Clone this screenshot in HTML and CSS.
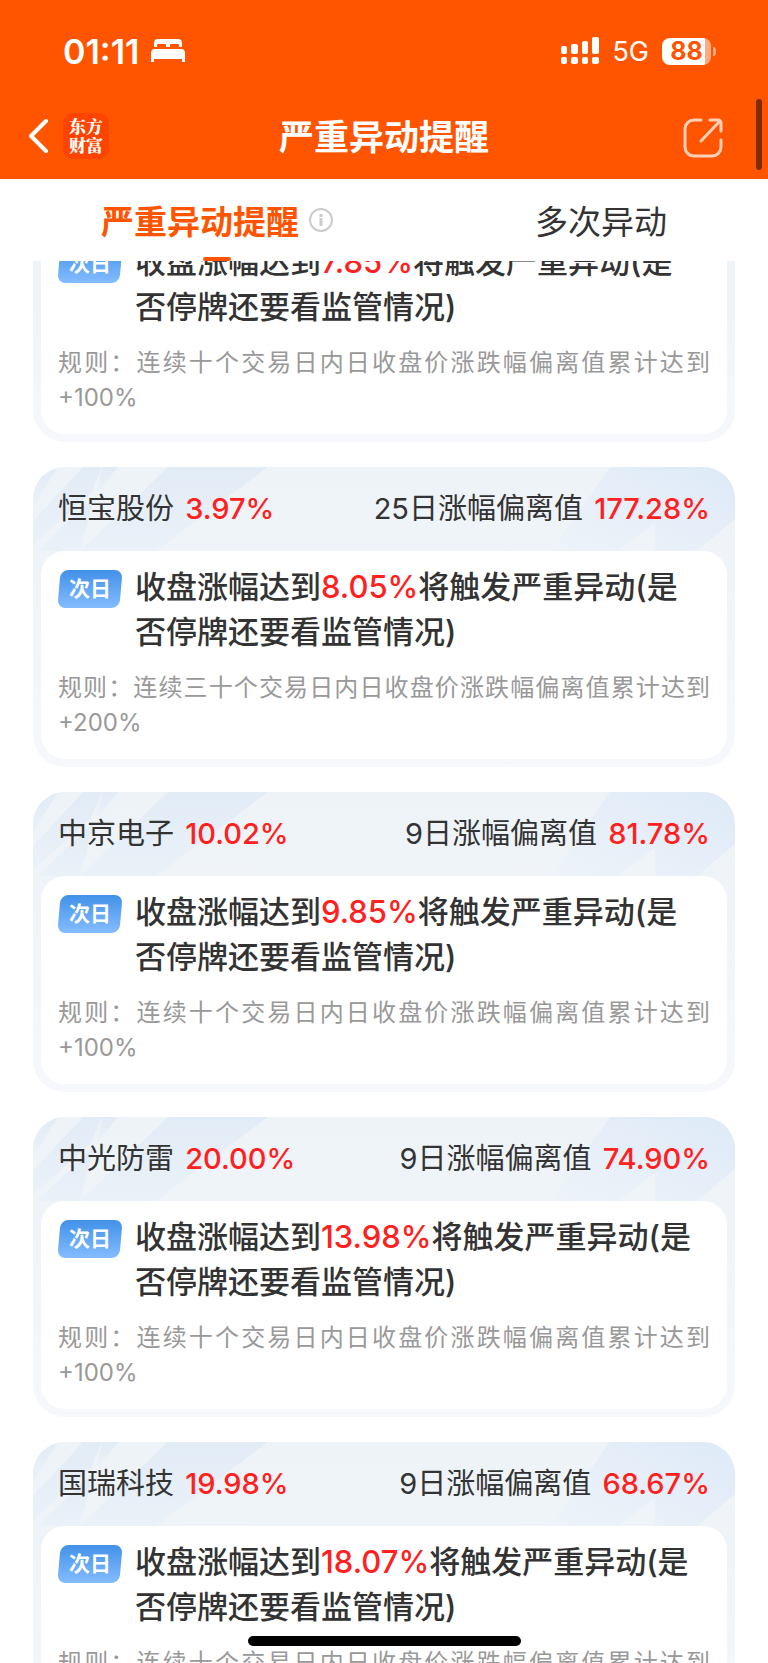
FILE: index.html
```html
<!DOCTYPE html>
<html lang="zh-CN">
<head>
  <meta charset="UTF-8">
  <meta name="viewport" content="width=device-width, initial-scale=1.0">
  <title>严重异动提醒</title>
  <link rel="stylesheet" href="styles.css">
</head>
<body>
  <svg class="defs" aria-hidden="true">
    <defs>
      <linearGradient id="ray" x1="0" y1="0" x2="0" y2="1">
        <stop offset="0" stop-color="#e2ecf6"/>
        <stop offset="1" stop-color="#eaf1f9"/>
      </linearGradient>
      <linearGradient id="ray-right" x1="0" y1="1" x2="1" y2="0">
        <stop offset="0" stop-color="#eef3f9"/>
        <stop offset="1" stop-color="#deeaf8"/>
      </linearGradient>
    </defs>
    <symbol id="rays" viewBox="0 0 702 84" preserveAspectRatio="none">
      <path fill="url(#ray)" d="M0 0H25L0 40z"/>
      <path fill="url(#ray)" d="M50 0H69L58 26 0 78V54z"/>
      <path fill="url(#ray)" d="M69 0H85L64 26z"/>
      <path fill="url(#ray)" d="M61 30 47 84H4z"/>
      <path fill="url(#ray)" d="M135 0H235L123 84H47z"/>
      <path fill="url(#ray-right)" d="M577 0H702V52L664 84H622V56L584 84H518z"/>
    </symbol>
  </svg>

  <div class="app">
    <header class="header">
      <div class="status">
        <span class="time">01:11</span>
        <svg class="bed" viewBox="0 0 34 24" fill="#fff">
          <path d="M3 8V4a4 4 0 0 1 4-4h20a4 4 0 0 1 4 4v4h-3V6a1 1 0 0 0-1-1h-7a1 1 0 0 0-1 1v2h-4V6a1 1 0 0 0-1-1H7a1 1 0 0 0-1 1v2z"/>
          <path d="M0 23V14a4 4 0 0 1 4-4h26a4 4 0 0 1 4 4v9h-3v-3H3v3z"/>
        </svg>
        <svg class="signal" viewBox="0 0 38 28" fill="#fff">
          <rect x="0" y="9" width="6" height="8" rx="2"/>
          <rect x="10" y="7" width="7" height="10" rx="2"/>
          <rect x="21" y="4" width="6" height="13" rx="2"/>
          <rect x="31" y="0" width="7" height="17" rx="2"/>
          <rect x="0" y="20" width="6" height="7" rx="2"/>
          <rect x="10" y="20" width="7" height="7" rx="2"/>
          <rect x="21" y="20" width="6" height="7" rx="2"/>
          <rect x="31" y="20" width="7" height="7" rx="2"/>
        </svg>
        <span class="network">5G</span>
        <span class="battery">88</span>
      </div>
      <nav class="nav">
        <button class="back" aria-label="返回">
          <svg width="20" height="36" viewBox="0 0 20 36" fill="none" stroke="#fff" stroke-width="4" stroke-linecap="round" stroke-linejoin="round">
            <path d="M17 3 2 18l15 15"/>
          </svg>
        </button>
        <span class="logo">东方<br>财富</span>
        <h1 class="title">严重异动提醒</h1>
        <button class="share" aria-label="分享">
          <svg width="40" height="40" viewBox="0 0 40 40" fill="none" stroke="#ffd0b8" stroke-width="3" stroke-linecap="round" stroke-linejoin="round">
            <path d="M18 2h-7a9 9 0 0 0-9 9v18a9 9 0 0 0 9 9h18a9 9 0 0 0 9-9v-7M27 2h8a3 3 0 0 1 3 3v8M36 4 18 23"/>
          </svg>
        </button>
      </nav>
      <div class="scrollbar"></div>
    </header>

    <div class="tabs">
      <button class="tab active">严重异动提醒
        <svg width="24" height="24" viewBox="0 0 24 24" fill="none" stroke="#ccc" stroke-width="2">
          <circle cx="12" cy="12" r="11"/>
          <path d="M12 10v8M12 6v3" stroke-width="3"/>
        </svg>
      </button>
      <button class="tab">多次异动</button>
    </div>

    <main class="list">
      <section class="card scrolled">
        <div class="card-body">
          <div class="alert">
            <span class="badge">次日</span>
            <p>收盘涨幅达到<b>7.85%</b>将触发严重异动(是否停牌还要看监管情况)</p>
          </div>
          <p class="rule">规则：连续十个交易日内日收盘价涨跌幅偏离值累计达到+100%</p>
        </div>
      </section>

      <section class="card">
        <svg class="rays"><use href="#rays"/></svg>
        <div class="card-head">
          <span>恒宝股份 <b>3.97%</b></span>
          <span>25日涨幅偏离值 <b>177.28%</b></span>
        </div>
        <div class="card-body">
          <div class="alert">
            <span class="badge">次日</span>
            <p>收盘涨幅达到<b>8.05%</b>将触发严重异动(是否停牌还要看监管情况)</p>
          </div>
          <p class="rule">规则：连续三十个交易日内日收盘价涨跌幅偏离值累计达到+200%</p>
        </div>
      </section>

      <section class="card">
        <svg class="rays"><use href="#rays"/></svg>
        <div class="card-head">
          <span>中京电子 <b>10.02%</b></span>
          <span>9日涨幅偏离值 <b>81.78%</b></span>
        </div>
        <div class="card-body">
          <div class="alert">
            <span class="badge">次日</span>
            <p>收盘涨幅达到<b>9.85%</b>将触发严重异动(是否停牌还要看监管情况)</p>
          </div>
          <p class="rule">规则：连续十个交易日内日收盘价涨跌幅偏离值累计达到+100%</p>
        </div>
      </section>

      <section class="card">
        <svg class="rays"><use href="#rays"/></svg>
        <div class="card-head">
          <span>中光防雷 <b>20.00%</b></span>
          <span>9日涨幅偏离值 <b>74.90%</b></span>
        </div>
        <div class="card-body">
          <div class="alert">
            <span class="badge">次日</span>
            <p>收盘涨幅达到<b>13.98%</b>将触发严重异动(是否停牌还要看监管情况)</p>
          </div>
          <p class="rule">规则：连续十个交易日内日收盘价涨跌幅偏离值累计达到+100%</p>
        </div>
      </section>

      <section class="card">
        <svg class="rays"><use href="#rays"/></svg>
        <div class="card-head">
          <span>国瑞科技 <b>19.98%</b></span>
          <span>9日涨幅偏离值 <b>68.67%</b></span>
        </div>
        <div class="card-body">
          <div class="alert">
            <span class="badge">次日</span>
            <p>收盘涨幅达到<b>18.07%</b>将触发严重异动(是否停牌还要看监管情况)</p>
          </div>
          <p class="rule">规则：连续十个交易日内日收盘价涨跌幅偏离值累计达到+100%</p>
        </div>
      </section>
    </main>
    <div class="home-bar"></div>
  </div>
</body>
</html>
```

FILE: styles.css
```css
* {
  box-sizing: border-box;
  margin: 0;
  padding: 0;
}
body {
  font-family: Inter, "Noto Sans CJK SC", sans-serif;
  color: #333;
  background: #fff;
}
button {
  border: none;
  background: none;
  font: inherit;
  color: inherit;
  cursor: pointer;
}
svg {
  display: block;
}
.defs {
  position: absolute;
  width: 0;
  height: 0;
}
.app {
  position: relative;
  display: flex;
  flex-direction: column;
  height: 100vh;
  overflow: hidden;
}

/* header */
.header {
  position: relative;
  flex: none;
  background: #ff5500;
  color: #fff;
}
.status {
  display: flex;
  align-items: center;
  height: 96px;
  padding: 6px 57px 0 63px;
}
.time {
  font-size: 34px;
  font-weight: 600;
}
.bed {
  width: 34px;
  height: 24px;
  margin-left: 12px;
}
.signal {
  width: 38px;
  height: 28px;
  margin-left: auto;
}
.network {
  margin: 0 13px;
  font-size: 27px;
}
.battery {
  position: relative;
  width: 49px;
  height: 27px;
  border-radius: 8px;
  background: linear-gradient(to right, #fff 43px, #ffaa80 43px);
  color: #ff5500;
  font-size: 25px;
  font-weight: 700;
  line-height: 27px;
  text-align: center;
}
.battery::after {
  content: "";
  position: absolute;
  left: 51px;
  top: 9px;
  width: 3px;
  height: 9px;
  border-radius: 0 3px 3px 0;
  background: #ffaa80;
}
.nav {
  display: grid;
  grid-template-columns: auto auto 1fr auto;
  align-items: center;
  height: 83px;
  padding: 0 45px 3px 29px;
}
.logo {
  width: 46px;
  height: 46px;
  margin-left: 14px;
  padding-top: 3px;
  border-radius: 10px;
  background: #ff4400;
  font-family: "Noto Serif CJK SC", "Noto Sans CJK SC", sans-serif;
  font-size: 17px;
  font-weight: 900;
  line-height: 19px;
  text-align: center;
}
.title {
  padding: 0 24px 4px 0;
  font-size: 35px;
  font-weight: 700;
  text-align: center;
}
.share {
  margin-top: 4px;
}
.scrollbar {
  position: absolute;
  right: 6px;
  top: 99px;
  width: 6px;
  height: 71px;
  border-radius: 3px;
  background: #802b00;
}

/* tabs */
.tabs {
  position: relative;
  z-index: 1;
  display: flex;
  flex: none;
  justify-content: space-around;
  height: 82px;
}
.tab {
  position: relative;
  display: flex;
  align-items: center;
  gap: 10px;
  font-size: 33px;
}
.tab.active {
  color: #ff5500;
  font-weight: 700;
}
.tab.active::after {
  content: "";
  position: absolute;
  left: 50%;
  bottom: 0;
  width: 28px;
  height: 4px;
  margin-left: -14px;
  border-radius: 2px;
  background: #ff5500;
}

/* cards */
.list {
  flex: 1;
  min-height: 0;
  overflow: hidden;
  padding: 0 33px;
}
.card {
  position: relative;
  margin-bottom: 25px;
  padding: 0 8px 8px;
  border-radius: 32px;
  background: linear-gradient(#eef3f8, #f1f5fa 60%, #f6f8fb);
  overflow: hidden;
}
.card.scrolled {
  margin-top: -35px;
}
.rays {
  position: absolute;
  left: 0;
  top: 0;
  width: 100%;
  height: 84px;
}
.card-head {
  position: relative;
  display: flex;
  justify-content: space-between;
  padding: 0 17px;
  font-size: 29px;
  line-height: 84px;
}
.card b {
  color: #ff2020;
  font-weight: 500;
}
.card-head b {
  margin-left: 3px;
}
.card-body {
  position: relative;
  padding: 13px 17px 19px;
  border-radius: 24px;
  background: #fff;
}
.alert {
  display: flex;
  align-items: flex-start;
  gap: 13px;
  padding-right: 12px;
  font-size: 31px;
  font-weight: 500;
  line-height: 45px;
}
.badge {
  position: relative;
  z-index: 0;
  flex: none;
  width: 64px;
  margin-top: 6px;
  color: #fff;
  font-size: 21px;
  font-weight: 700;
  line-height: 38px;
  text-align: center;
}
.badge::before {
  content: "";
  position: absolute;
  inset: 0 1px;
  z-index: -1;
  border-radius: 8px;
  background: linear-gradient(#4291e8, #84bcff);
  transform: skewX(-5deg);
}
.rule {
  margin-top: 16px;
  color: #999;
  font-size: 24px;
  line-height: 35px;
  text-align: justify;
}

.home-bar {
  position: absolute;
  left: 50%;
  bottom: 17px;
  width: 273px;
  height: 10px;
  margin-left: -136px;
  border-radius: 5px;
  background: #000;
}
```
